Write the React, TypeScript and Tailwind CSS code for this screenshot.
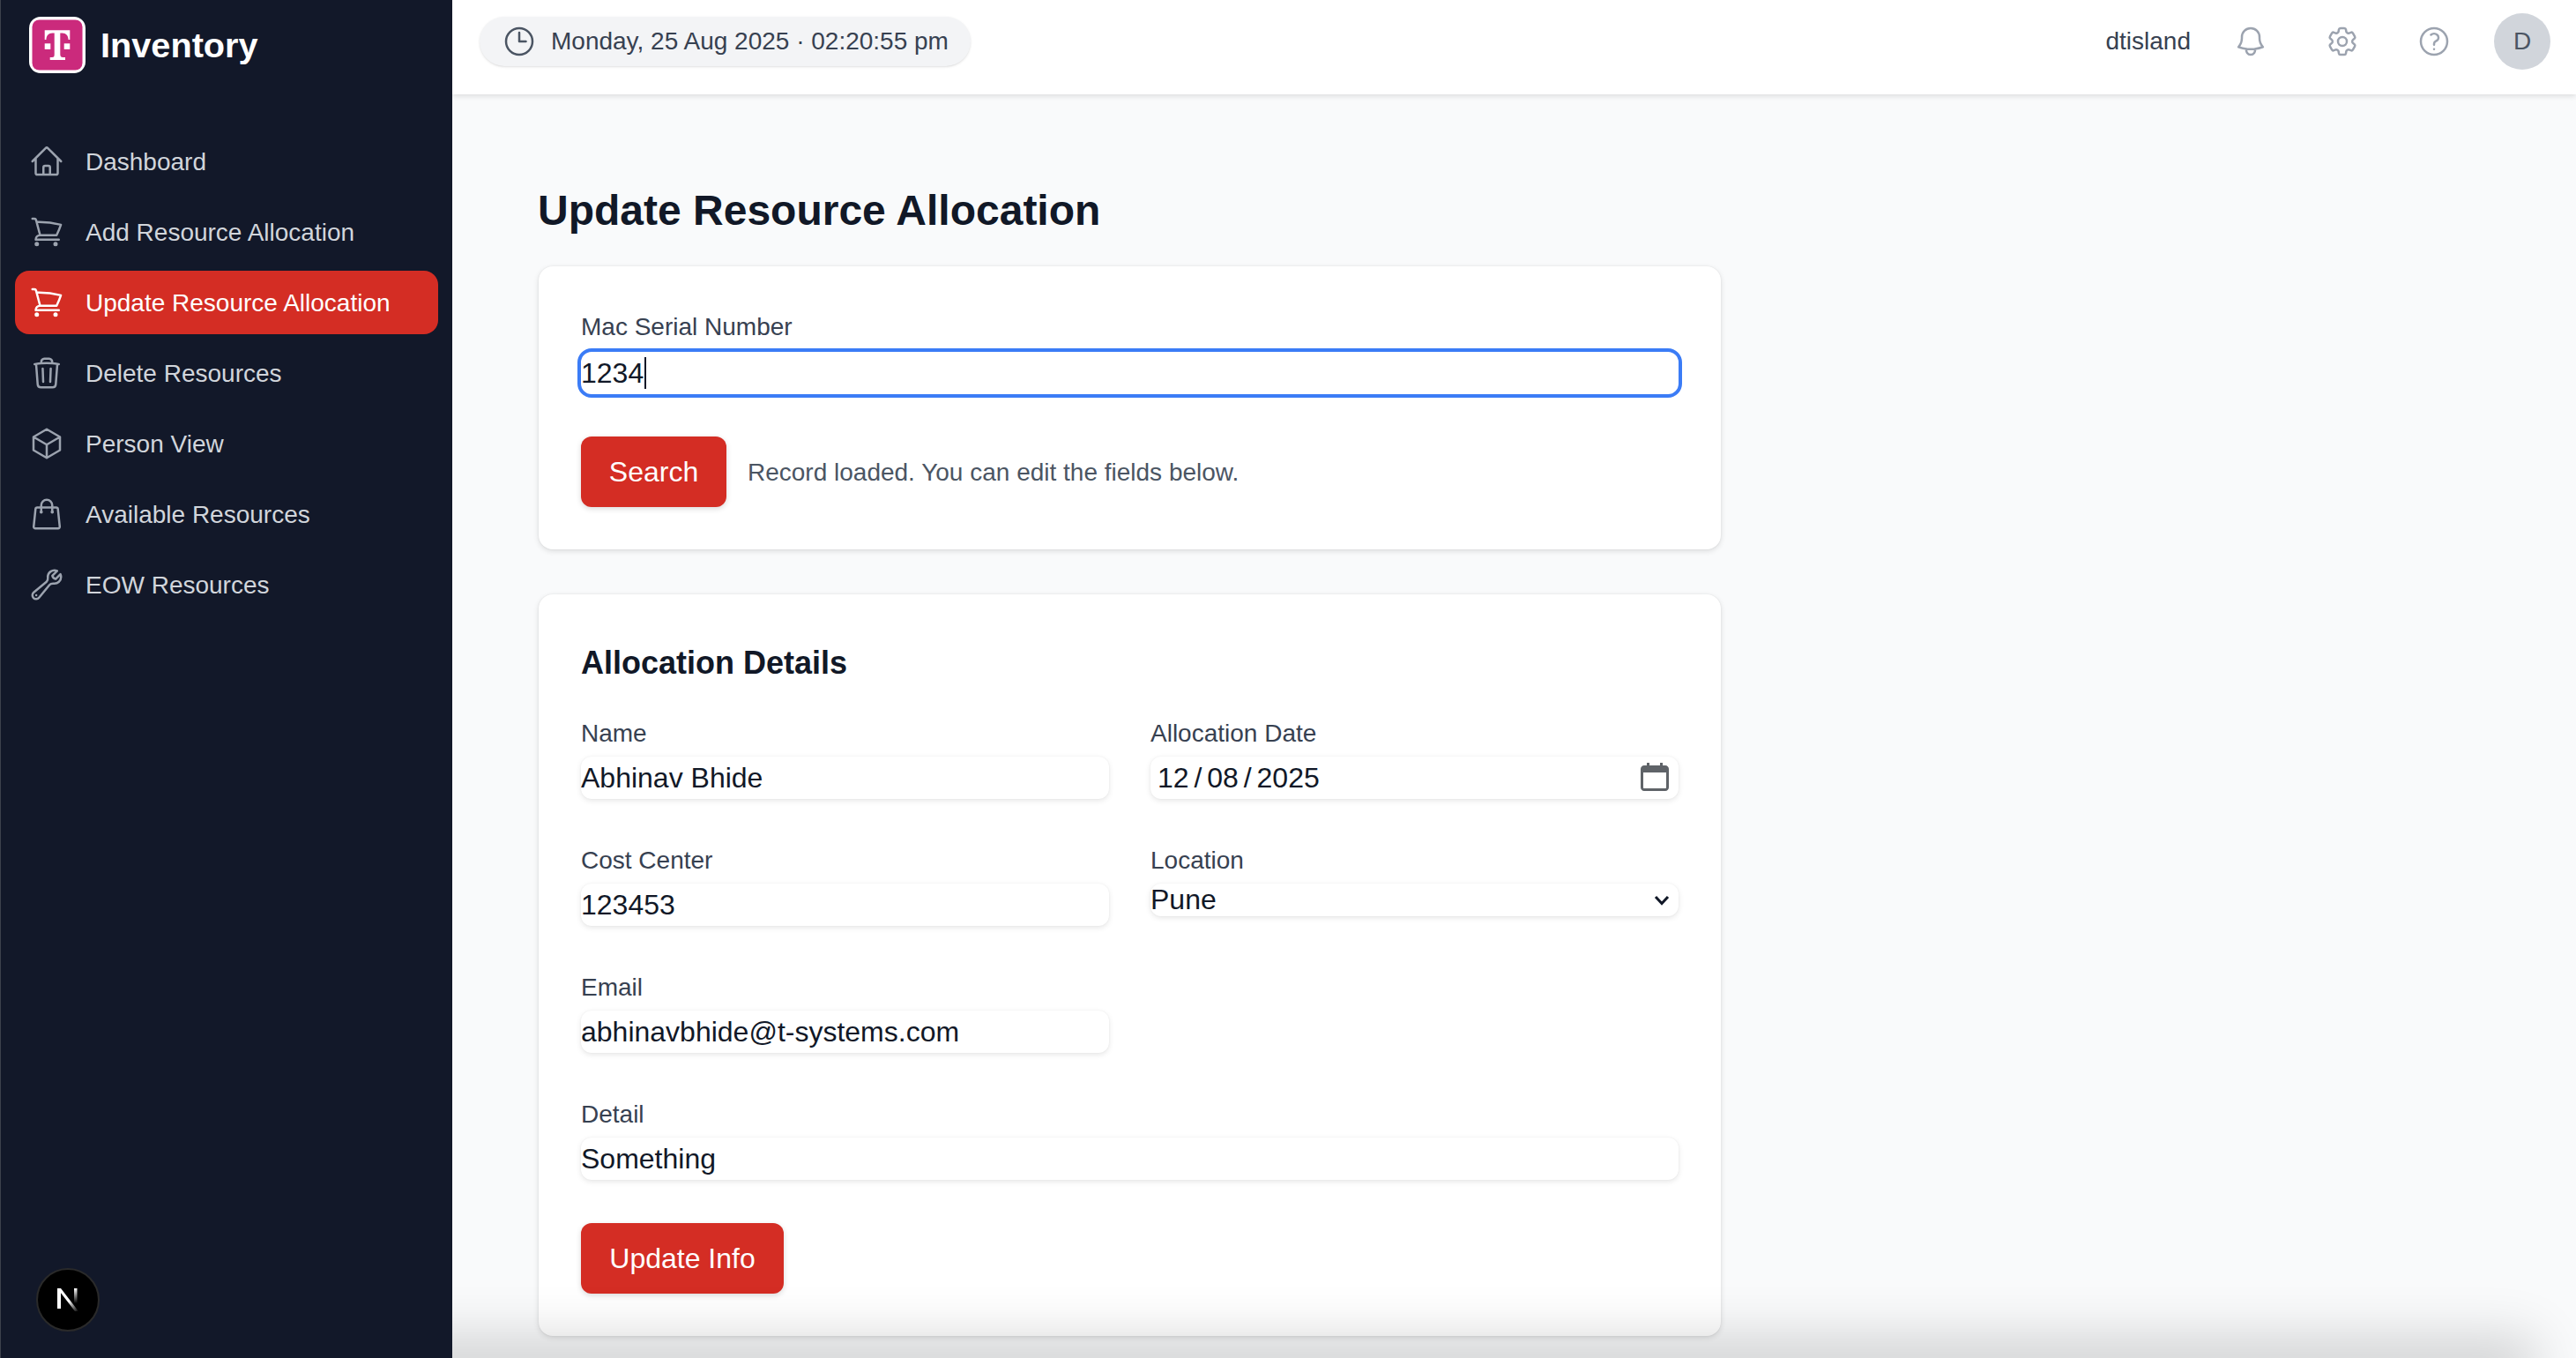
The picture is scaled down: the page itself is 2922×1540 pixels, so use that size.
import React from "react";
import {
  HiOutlineHome,
  HiOutlineShoppingCart,
  HiOutlineTrash,
  HiOutlineCube,
  HiOutlineShoppingBag,
  HiOutlineWrench,
  HiOutlineClock,
  HiOutlineBell,
  HiOutlineCog6Tooth,
  HiOutlineQuestionMarkCircle,
} from "react-icons/hi2";

const nav = [
  { label: "Dashboard", Icon: HiOutlineHome },
  { label: "Add Resource Allocation", Icon: HiOutlineShoppingCart },
  { label: "Update Resource Allocation", Icon: HiOutlineShoppingCart, active: true },
  { label: "Delete Resources", Icon: HiOutlineTrash },
  { label: "Person View", Icon: HiOutlineCube },
  { label: "Available Resources", Icon: HiOutlineShoppingBag },
  { label: "EOW Resources", Icon: HiOutlineWrench },
];

function Logo() {
  return (
    <svg viewBox="0 0 64 64" className="w-16 h-16 shrink-0">
      <rect width="64" height="64" rx="13" fill="#ffffff" />
      <rect x="3.5" y="3.5" width="57" height="57" rx="8" fill="#cb2a7c" />
      <path
        d="M17.7 15.3H46.3V26H44.6C44.2 21 42 18.6 37.6 18.4H35.3V42.5C35.3 45 36.2 46 38.5 46H41V49H23.7V46H26C28.3 46 28.7 45 28.7 42.5V18.4H26.4C22 18.6 19.8 21 19.4 26H17.7Z"
        fill="#ffffff"
      />
      <rect x="17.7" y="30.3" width="6.6" height="6.6" fill="#ffffff" />
      <rect x="39.7" y="30.3" width="6.6" height="6.6" fill="#ffffff" />
    </svg>
  );
}

function NextBadge() {
  return (
    <div className="w-[72px] h-[72px] rounded-full bg-black border-2 border-[#2a2a2a] ml-[24px] flex items-center justify-center">
      <svg viewBox="0 0 30 30" className="w-[30px] h-[30px]">
        <defs>
          <linearGradient id="nd" x1="0" y1="0" x2="1" y2="1">
            <stop offset="0.55" stopColor="#ffffff" />
            <stop offset="1" stopColor="#ffffff" stopOpacity="0" />
          </linearGradient>
          <linearGradient id="nv" x1="0" y1="0" x2="0" y2="1">
            <stop offset="0" stopColor="#ffffff" />
            <stop offset="1" stopColor="#ffffff" stopOpacity="0" />
          </linearGradient>
        </defs>
        <rect x="3" y="2" width="4" height="23" fill="#ffffff" />
        <path d="M3 2H7L27 28H23Z" fill="url(#nd)" />
        <rect x="22" y="2" width="3.5" height="17" fill="url(#nv)" />
      </svg>
    </div>
  );
}

function Field({
  label,
  value,
  className = "",
}: {
  label: string;
  value: string;
  className?: string;
}) {
  return (
    <label className={"flex flex-col " + className}>
      <span className="text-[28px] leading-[44px] text-[#374151] mb-1">{label}</span>
      <input
        readOnly
        value={value}
        className="w-full h-12 rounded-xl bg-white shadow-[0_2px_6px_rgba(0,0,0,0.1),0_0_2px_rgba(0,0,0,0.05)] text-[32px] text-[#111827] outline-none"
      />
    </label>
  );
}

export default function App() {
  return (
    <div className="h-screen w-full flex overflow-hidden bg-[#f9fafb] font-['Liberation_Sans',Arial,sans-serif]">
      <aside className="w-[513px] shrink-0 h-full bg-[#121829] border-l border-[#3c414c] flex flex-col pt-[19px] pb-[30px] pl-4 pr-4">
        <div className="flex items-center gap-[17px] pl-4">
          <Logo />
          <span className="text-[39.7px] leading-[64px] font-bold text-white">Inventory</span>
        </div>
        <nav className="flex flex-col gap-2 mt-16 flex-1">
          {nav.map(({ label, Icon, active }) => (
            <a
              key={label}
              className={
                "h-[72px] rounded-2xl flex items-center gap-6 pl-4 text-[28px] " +
                (active ? "bg-[#d42d24] text-white" : "text-[#d1d5db]")
              }
            >
              <Icon className={"w-10 h-10 shrink-0 " + (active ? "text-white" : "text-[#9ca3af]")} />
              <span className="pt-[2px]">{label}</span>
            </a>
          ))}
        </nav>
        <NextBadge />
      </aside>

      <div className="relative flex-1 flex flex-col min-w-0 overflow-hidden">
        <header className="relative z-10 h-[107px] shrink-0 bg-white shadow-[0_2px_6px_rgba(0,0,0,0.12)] flex items-center justify-between pb-[13px] pl-[31px] pr-[29px]">
          <div className="h-14 rounded-full bg-[#f3f4f6] shadow-sm flex items-center gap-5 pl-[29px] pr-[25px] text-[28px] text-[#374151]">
            <HiOutlineClock className="w-10 h-10 -mx-1 text-[#4b5563]" />
            <span>Monday, 25 Aug 2025 · 02:20:55 pm</span>
          </div>
          <div className="flex items-center gap-[48px]">
            <span className="text-[28px] text-[#374151]">dtisland</span>
            <div className="flex items-center gap-16 text-[#9ca3af]">
              <HiOutlineBell className="w-10 h-10" />
              <HiOutlineCog6Tooth className="w-10 h-10" />
              <HiOutlineQuestionMarkCircle className="w-10 h-10" />
            </div>
            <div className="w-16 h-16 rounded-full bg-[#d1d5db] flex items-center justify-center text-[28px] text-[#4b5563]">
              D
            </div>
          </div>
        </header>

        <main className="flex-1 overflow-hidden pt-[100px] pl-[98px]">
          <h1 className="-ml-px text-[48px] leading-[64px] font-bold text-[#111827] mb-[31px]">
            Update Resource Allocation
          </h1>

          <section className="w-[1341px] rounded-2xl bg-white shadow-[0_2px_6px_rgba(0,0,0,0.12),0_0_2px_rgba(0,0,0,0.08)] p-12">
            <label className="flex flex-col">
              <span className="text-[28px] leading-[42px] text-[#374151] mb-[7px]">Mac Serial Number</span>
              <span className="relative block">
                <input
                  readOnly
                  value="1234"
                  className="block w-full h-12 rounded-xl bg-white text-[32px] text-[#111827] caret-transparent outline-4 outline-[#3b7cf6]"
                />
                <span className="absolute left-[72px] top-[6px] w-[2px] h-9 bg-[#111827]" />
              </span>
            </label>
            <div className="flex items-center gap-6 mt-12">
              <button className="h-20 w-[165px] rounded-xl bg-[#d42d24] text-white text-[32px] shadow-[0_2px_6px_rgba(0,0,0,0.15)]">
                Search
              </button>
              <span className="pt-[2px] text-[28px] text-[#4b5563]">Record loaded. You can edit the fields below.</span>
            </div>
          </section>

          <section className="w-[1341px] mt-[51px] rounded-2xl bg-white shadow-[0_2px_6px_rgba(0,0,0,0.12),0_0_2px_rgba(0,0,0,0.08)] p-12">
            <h2 className="text-[36px] leading-[60px] font-bold text-[#111827] mb-[28px]">Allocation Details</h2>
            <div className="grid grid-cols-2 gap-x-[47px] gap-y-12">
              <Field label="Name" value="Abhinav Bhide" />
              <label className="flex flex-col">
                <span className="text-[28px] leading-[44px] text-[#374151] mb-1">Allocation Date</span>
                <span className="relative block">
                  <input
                    readOnly
                    value="12 / 08 / 2025"
                    className="block w-full h-12 rounded-xl bg-white shadow-[0_2px_6px_rgba(0,0,0,0.1),0_0_2px_rgba(0,0,0,0.05)] pl-2 text-[32px] text-[#111827] outline-none [word-spacing:-3px]"
                  />
                  <svg viewBox="0 0 32 32" className="absolute right-[11px] top-[7px] w-8 h-8 pointer-events-none">
                    <path
                      d="M7 0H10V3H22V0H25V3H28C30.2 3 32 4.8 32 7V28C32 30.2 30.2 32 28 32H4C1.8 32 0 30.2 0 28V7C0 4.8 1.8 3 4 3H7ZM3 11V28C3 28.6 3.4 29 4 29H28C28.6 29 29 28.6 29 28V11Z"
                      fill="#5f6368"
                    />
                  </svg>
                </span>
              </label>
              <Field label="Cost Center" value="123453" />
              <label className="flex flex-col">
                <span className="text-[28px] leading-[44px] text-[#374151] mb-1">Location</span>
                <span className="relative block">
                  <select
                    defaultValue="Pune"
                    className="block w-full h-[37px] appearance-none rounded-xl bg-white shadow-[0_2px_6px_rgba(0,0,0,0.1),0_0_2px_rgba(0,0,0,0.05)] text-[32px] leading-[37px] text-[#111827] outline-none"
                  >
                    <option>Pune</option>
                  </select>
                  <svg viewBox="0 0 18 12" className="absolute right-[10px] top-[13px] w-[18px] h-3 pointer-events-none">
                    <path d="M2 2L9 9.5L16 2" fill="none" stroke="#111827" strokeWidth="3" />
                  </svg>
                </span>
              </label>
              <Field label="Email" value="abhinavbhide@t-systems.com" />
              <div />
              <Field label="Detail" value="Something" className="col-span-2" />
            </div>
            <button className="mt-[49px] h-20 w-[230px] rounded-xl bg-[#d42d24] text-white text-[32px] shadow-[0_2px_6px_rgba(0,0,0,0.15)] block">
              Update Info
            </button>
          </section>
        </main>

        <div className="absolute z-20 left-[-40px] right-[70px] -bottom-5 h-5 shadow-[0_0_60px_24px_rgba(0,0,0,0.16)] pointer-events-none" />
      </div>
    </div>
  );
}
